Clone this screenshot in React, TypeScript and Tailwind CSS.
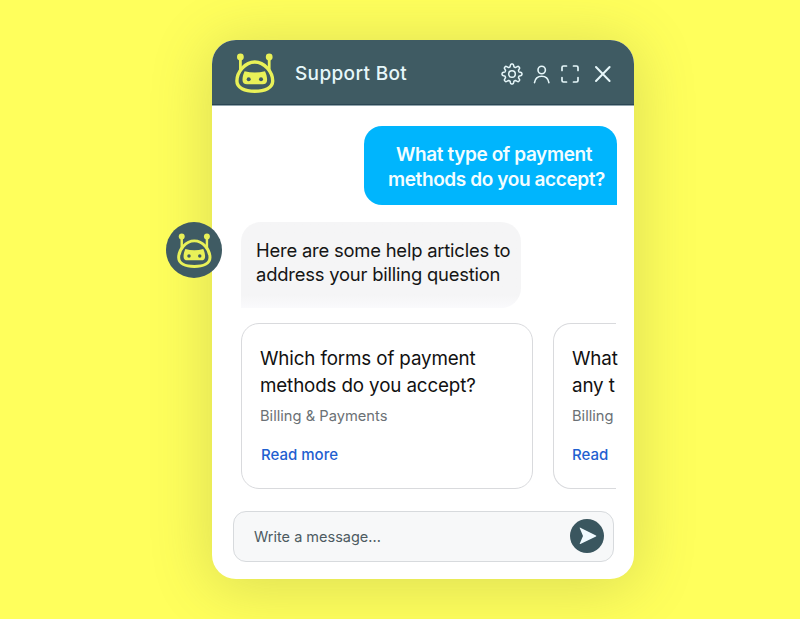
import React from "react";

function BotIcon({ className }: { className: string }) {
  return (
    <svg viewBox="0 0 40 40" className={className} fill="none" aria-hidden="true">
      <path d="M5.4 4V19M34.2 4V19" stroke="currentColor" strokeWidth="2.8" />
      <circle cx="5.4" cy="4" r="3.4" fill="currentColor" />
      <circle cx="34.2" cy="4" r="3.4" fill="currentColor" />
      <path
        d="M19.8 9C29.5 9 37.7 19 37.7 28C37.7 34.8 30 38.2 19.8 38.2C9.6 38.2 1.9 34.8 1.9 28C1.9 19 10.1 9 19.8 9Z"
        className="fill-[#3f5b63]"
        stroke="currentColor"
        strokeWidth="3.4"
      />
      <path
        d="M9.6 18.2Q19.8 21 30 18.2C31.4 21 32.1 24 32.1 27Q32.1 31.2 27.6 31.2H12Q7.5 31.2 7.5 27C7.5 24 8.2 21 9.6 18.2Z"
        fill="currentColor"
      />
      <circle cx="13.7" cy="26.3" r="2" className="fill-[#3f5b63]" />
      <circle cx="26" cy="26.3" r="2" className="fill-[#3f5b63]" />
    </svg>
  );
}

function GearIcon() {
  const points: string[] = [];
  for (let i = 0; i <= 96; i++) {
    const a = (i / 96) * Math.PI * 2;
    const wave = Math.tanh(2 * Math.cos(8 * a)) / Math.tanh(2);
    const r = 8.6 + 1.35 * wave;
    points.push(`${(11 + r * Math.sin(a)).toFixed(2)} ${(11 - r * Math.cos(a)).toFixed(2)}`);
  }
  return (
    <svg viewBox="0 0 22 22" className="h-[22px] w-[22px]" fill="none" stroke="currentColor" strokeWidth="1.5" strokeLinejoin="round">
      <path d={`M${points.join("L")}Z`} />
      <circle cx="11" cy="11" r="3.3" />
    </svg>
  );
}

function Header() {
  return (
    <header className="flex h-[65px] items-center border-b border-[#2b4653] bg-[#3f5b63] pl-[23px] pr-[22px] pt-[2px] text-[#e6f7fa]">
      <BotIcon className="h-10 w-10 text-[#e9f158]" />
      <h1 className="ml-5 pt-[2px] text-[19px] font-medium leading-6 tracking-[0.35px]">Support Bot</h1>
      <div className="ml-auto flex items-center pt-[2px]">
        <GearIcon />
        <svg viewBox="0 0 18 20" className="ml-[10px] h-5 w-[18px]" fill="none" stroke="currentColor" strokeWidth="1.6" strokeLinecap="round">
          <circle cx="8.7" cy="6" r="3.7" />
          <path d="M1.5 18.6C2.2 14.2 5 12.2 8.7 12.2S15.2 14.2 15.9 18.6" />
        </svg>
        <svg viewBox="0 0 18 18" className="ml-[10px] h-[18px] w-[18px]" fill="none" stroke="currentColor" strokeWidth="1.7" strokeLinecap="round" strokeLinejoin="round">
          <path d="M1 5.5V2.5Q1 1 2.5 1H5.5M12.5 1H15.5Q17 1 17 2.5V5.5M17 12.5V15.5Q17 17 15.5 17H12.5M5.5 17H2.5Q1 17 1 15.5V12.5" />
        </svg>
        <svg viewBox="0 0 18 18" className="ml-[15px] h-[18px] w-[18px]" fill="none" stroke="currentColor" strokeWidth="2" strokeLinecap="round">
          <path d="M2 2L15.6 16M15.6 2L2 16" />
        </svg>
      </div>
    </header>
  );
}

export default function App() {
  return (
    <main className="flex h-[619px] w-[800px] justify-center overflow-hidden bg-[#ffff5c] pl-[46px] pt-10 font-['Inter','Liberation_Sans',sans-serif]">
      <section className="h-[539px] w-[422px] rounded-[24px] bg-white shadow-[0_6px_60px_4px_rgba(80,90,60,0.2)]">
        <div className="overflow-hidden rounded-t-[24px] border-b border-[#93a6ae]">
          <Header />
        </div>

        <div className="ml-auto mr-[17.5px] mt-5 h-[79px] w-[252.5px] whitespace-nowrap rounded-[18px] rounded-br-none bg-[#00b5fd] pl-6 pt-4 text-[19px] font-semibold leading-[25px] tracking-[-0.39px] text-[#f3fdff]">
          <span className="ml-2">What type of payment</span>
          <br />
          methods do you accept?
        </div>

        <div className="-ml-[46px] mt-[17px] flex items-start">
          <div className="flex h-14 w-14 items-center justify-center rounded-full bg-[#3f5b63]">
            <BotIcon className="h-[35px] w-[35px] text-[#e9f158]" />
          </div>
          <div className="ml-[19px] h-[86px] w-[280px] whitespace-nowrap rounded-[20px] rounded-bl-none bg-linear-to-b from-[#f5f5f6] from-85% to-[#fafafc] pl-[15px] pt-[15.5px] text-[18.4px] leading-6 tracking-[-0.2px] text-[#151515]">
            Here are some help articles to
            <br />
            address your billing question
          </div>
        </div>

        <div className="ml-[29px] mt-[15px] flex gap-5">
          <article className="h-[166px] w-[292px] rounded-[18px] border border-[#d9dadd] pl-[18px] pt-[22px]">
            <h2 className="text-[18.8px] leading-[26.5px] tracking-[-0.14px] text-[#111]">
              Which forms of payment
              <br />
              methods do you accept?
            </h2>
            <p className="mt-[7px] text-[14.7px] leading-5 text-[#6b7175]">Billing &amp; Payments</p>
            <a className="ml-px mt-[19px] block text-[15px] font-medium leading-5 text-[#1f60d0]">Read more</a>
          </article>
          <article className="h-[166px] w-[63px] whitespace-nowrap rounded-l-[18px] border border-r-0 border-[#d9dadd] pl-[18px] pt-[22px]">
            <h2 className="text-[18.8px] leading-[26.5px] tracking-[-0.14px] text-[#111]">
              What
              <br />
              any t
            </h2>
            <p className="mt-[7px] text-[14.7px] leading-5 text-[#6b7175]">Billing</p>
            <a className="mt-[19px] block text-[15px] font-medium leading-5 text-[#1f60d0]">Read</a>
          </article>
        </div>

        <div className="ml-[21px] mt-[22px] flex h-[51px] w-[381px] items-center justify-between rounded-[13px] border border-[#d7dadd] bg-[#f7f8f9] pl-5 pr-[9px]">
          <span className="pt-px text-[14.5px] leading-5 text-[#4d5b61]">Write a message...</span>
          <span className="mb-[1px] flex h-[34px] w-[34px] items-center justify-center rounded-full bg-[#3a565f]">
            <svg viewBox="0 0 18 18" className="ml-[2px] h-[18px] w-[18px]" fill="#f0faff">
              <path d="M.8 1.2Q.4.4 1.4.7L17 8.5Q17.7 9 17 9.4L1.4 17Q.3 17.4.8 16.5L4 9Z" />
            </svg>
          </span>
        </div>
      </section>
    </main>
  );
}
